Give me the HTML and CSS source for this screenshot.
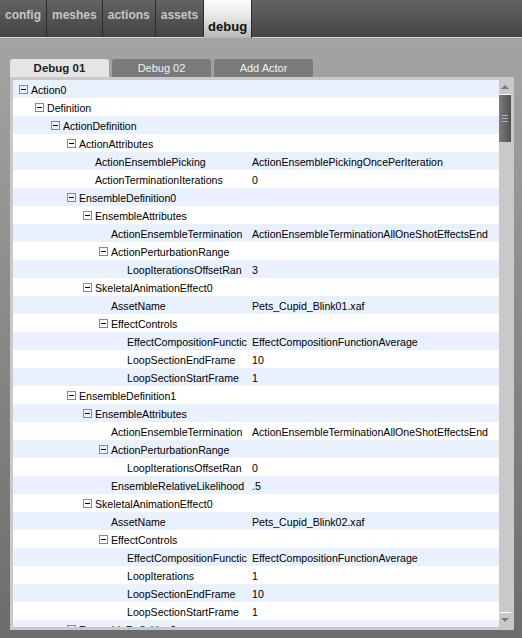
FILE: index.html
```html
<!DOCTYPE html>
<html>
<head>
<meta charset="utf-8">
<link rel="stylesheet" href="styles.css">
</head>
<body>
<div class="topbar">
  <div class="ttab">config</div>
  <div class="ttab">meshes</div>
  <div class="ttab">actions</div>
  <div class="ttab">assets</div>
  <div class="ttab active">debug</div>
</div>
<div class="subtabs">
  <div class="stab active">Debug 01</div>
  <div class="stab">Debug 02</div>
  <div class="stab">Add Actor</div>
</div>
<div class="panel">
  <div class="tree">
    <div class="row l0"><div class="name"><span class="box"></span><span>Action0</span></div></div>
    <div class="row l1"><div class="name"><span class="box"></span><span>Definition</span></div></div>
    <div class="row l2"><div class="name"><span class="box"></span><span>ActionDefinition</span></div></div>
    <div class="row l3"><div class="name"><span class="box"></span><span>ActionAttributes</span></div></div>
    <div class="row l4"><div class="name"><span class="leaf"></span><span>ActionEnsemblePicking</span></div><div class="val">ActionEnsemblePickingOncePerIteration</div></div>
    <div class="row l4"><div class="name"><span class="leaf"></span><span>ActionTerminationIterations</span></div><div class="val">0</div></div>
    <div class="row l3"><div class="name"><span class="box"></span><span>EnsembleDefinition0</span></div></div>
    <div class="row l4"><div class="name"><span class="box"></span><span>EnsembleAttributes</span></div></div>
    <div class="row l5"><div class="name"><span class="leaf"></span><span>ActionEnsembleTermination</span></div><div class="val">ActionEnsembleTerminationAllOneShotEffectsEnd</div></div>
    <div class="row l5"><div class="name"><span class="box"></span><span>ActionPerturbationRange</span></div></div>
    <div class="row l6"><div class="name"><span class="leaf"></span><span>LoopIterationsOffsetRan</span></div><div class="val">3</div></div>
    <div class="row l4"><div class="name"><span class="box"></span><span>SkeletalAnimationEffect0</span></div></div>
    <div class="row l5"><div class="name"><span class="leaf"></span><span>AssetName</span></div><div class="val">Pets_Cupid_Blink01.xaf</div></div>
    <div class="row l5"><div class="name"><span class="box"></span><span>EffectControls</span></div></div>
    <div class="row l6"><div class="name"><span class="leaf"></span><span>EffectCompositionFunctic</span></div><div class="val">EffectCompositionFunctionAverage</div></div>
    <div class="row l6"><div class="name"><span class="leaf"></span><span>LoopSectionEndFrame</span></div><div class="val">10</div></div>
    <div class="row l6"><div class="name"><span class="leaf"></span><span>LoopSectionStartFrame</span></div><div class="val">1</div></div>
    <div class="row l3"><div class="name"><span class="box"></span><span>EnsembleDefinition1</span></div></div>
    <div class="row l4"><div class="name"><span class="box"></span><span>EnsembleAttributes</span></div></div>
    <div class="row l5"><div class="name"><span class="leaf"></span><span>ActionEnsembleTermination</span></div><div class="val">ActionEnsembleTerminationAllOneShotEffectsEnd</div></div>
    <div class="row l5"><div class="name"><span class="box"></span><span>ActionPerturbationRange</span></div></div>
    <div class="row l6"><div class="name"><span class="leaf"></span><span>LoopIterationsOffsetRan</span></div><div class="val">0</div></div>
    <div class="row l5"><div class="name"><span class="leaf"></span><span>EnsembleRelativeLikelihood</span></div><div class="val">.5</div></div>
    <div class="row l4"><div class="name"><span class="box"></span><span>SkeletalAnimationEffect0</span></div></div>
    <div class="row l5"><div class="name"><span class="leaf"></span><span>AssetName</span></div><div class="val">Pets_Cupid_Blink02.xaf</div></div>
    <div class="row l5"><div class="name"><span class="box"></span><span>EffectControls</span></div></div>
    <div class="row l6"><div class="name"><span class="leaf"></span><span>EffectCompositionFunctic</span></div><div class="val">EffectCompositionFunctionAverage</div></div>
    <div class="row l6"><div class="name"><span class="leaf"></span><span>LoopIterations</span></div><div class="val">1</div></div>
    <div class="row l6"><div class="name"><span class="leaf"></span><span>LoopSectionEndFrame</span></div><div class="val">10</div></div>
    <div class="row l6"><div class="name"><span class="leaf"></span><span>LoopSectionStartFrame</span></div><div class="val">1</div></div>
    <div class="row l3"><div class="name"><span class="box"></span><span>EnsembleDefinition2</span></div></div>
  </div>
  <div class="scrollbar">
    <div class="sb-up"><svg width="12" height="14" viewBox="0 0 12 14"><path d="M2 9 L6 5 L10 9 Z" fill="#7a7a7a"/></svg></div>
    <div class="sb-thumb"><span class="grip"></span><span class="grip"></span><span class="grip"></span></div>
    <div class="sb-track"></div>
    <div class="sb-down"><svg width="12" height="14" viewBox="0 0 12 14"><path d="M2 5 L10 5 L6 9 Z" fill="#7a7a7a"/></svg></div>
  </div>
</div>
</body>
</html>
```
FILE: styles.css
```css
html, body {
  margin: 0;
  padding: 0;
}
body {
  width: 522px;
  height: 638px;
  overflow: hidden;
  background: linear-gradient(to bottom, #a4a4a4 0px, #a2a2a2 60px, #6c6c6c 638px);
  font-family: "Liberation Sans", Arial, sans-serif;
}
.topbar {
  display: flex;
  height: 37px;
  border-bottom: 1px solid #d6d6d6;
  background: linear-gradient(to bottom, #636363, #444444);
}
.ttab {
  padding: 0 5px;
  border-right: 1px solid #2c2c2c;
  color: #c6c6c6;
  font-weight: bold;
  font-size: 12px;
  line-height: 30px;
  height: 37px;
  box-sizing: border-box;
}
.ttab.active {
  height: 38px;
  margin-bottom: -1px;
  padding: 15px 4px 0 4px;
  line-height: 23px;
  font-size: 13px;
  color: #111111;
  border-right: 1px solid #2c2c2c;
  background: linear-gradient(to bottom, #fbfbfb, #e6e6e6 45%, #b6b6b6);
}
.subtabs {
  display: flex;
  gap: 3px;
  margin-top: 21px;
  padding-left: 10px;
  height: 18px;
}
.stab {
  width: 99px;
  height: 18px;
  line-height: 18px;
  text-align: center;
  font-size: 11px;
  color: #f0f0f0;
  background: #7b7b7b;
  border-radius: 3px 3px 0 0;
}
.stab.active {
  background: #e5e5e5;
  color: #222222;
  font-weight: bold;
  font-size: 11.5px;
}
.panel {
  display: flex;
  margin-left: 10px;
  width: 504px;
  height: 553px;
  box-sizing: border-box;
  padding: 3px;
  background: #c9c9c9;
}
.tree {
  width: 486px;
  height: 547px;
  overflow: hidden;
  font-size: 10.6px;
  color: #000000;
}
.row {
  display: flex;
  height: 18px;
  overflow: hidden;
  background: #ffffff;
  white-space: nowrap;
}
.row:nth-child(odd) {
  background: #e9f0fe;
}
.name {
  display: flex;
  align-items: flex-start;
  width: 235px;
  flex: none;
  overflow: hidden;
  box-sizing: border-box;
}
.l0 .name { padding-left: 6px; }
.l1 .name { padding-left: 22px; }
.l2 .name { padding-left: 38px; }
.l3 .name { padding-left: 54px; }
.l4 .name { padding-left: 70px; }
.l5 .name { padding-left: 86px; }
.l6 .name { padding-left: 102px; }
.name span:last-child,
.val {
  padding-top: 2px;
  line-height: 17px;
}
.box,
.leaf {
  flex: none;
  width: 9px;
  height: 9px;
  margin-top: 5px;
  margin-right: 3px;
  box-sizing: border-box;
}
.box {
  border: 1px solid #8a8a8a;
  background: linear-gradient(#000, #000) center / 5px 1px no-repeat;
}
.val {
  padding-left: 4px;
}
.scrollbar {
  width: 12px;
  height: 547px;
  display: flex;
  flex-direction: column;
}
.sb-up,
.sb-down {
  height: 14px;
  flex: none;
}
.sb-up svg,
.sb-down svg {
  display: block;
}
.sb-up {
  border-bottom: 1px solid #ffffff;
}
.sb-thumb {
  height: 47px;
  flex: none;
  background: linear-gradient(to right, #7e7e7e, #6a6a6a 40%, #505050);
  display: flex;
  flex-direction: column;
  align-items: center;
  justify-content: center;
  gap: 2px;
}
.grip {
  width: 6px;
  height: 1px;
  background: #b4b4b4;
}
.sb-track {
  flex: 1;
  border-bottom: 1px solid #ffffff;
}
```
